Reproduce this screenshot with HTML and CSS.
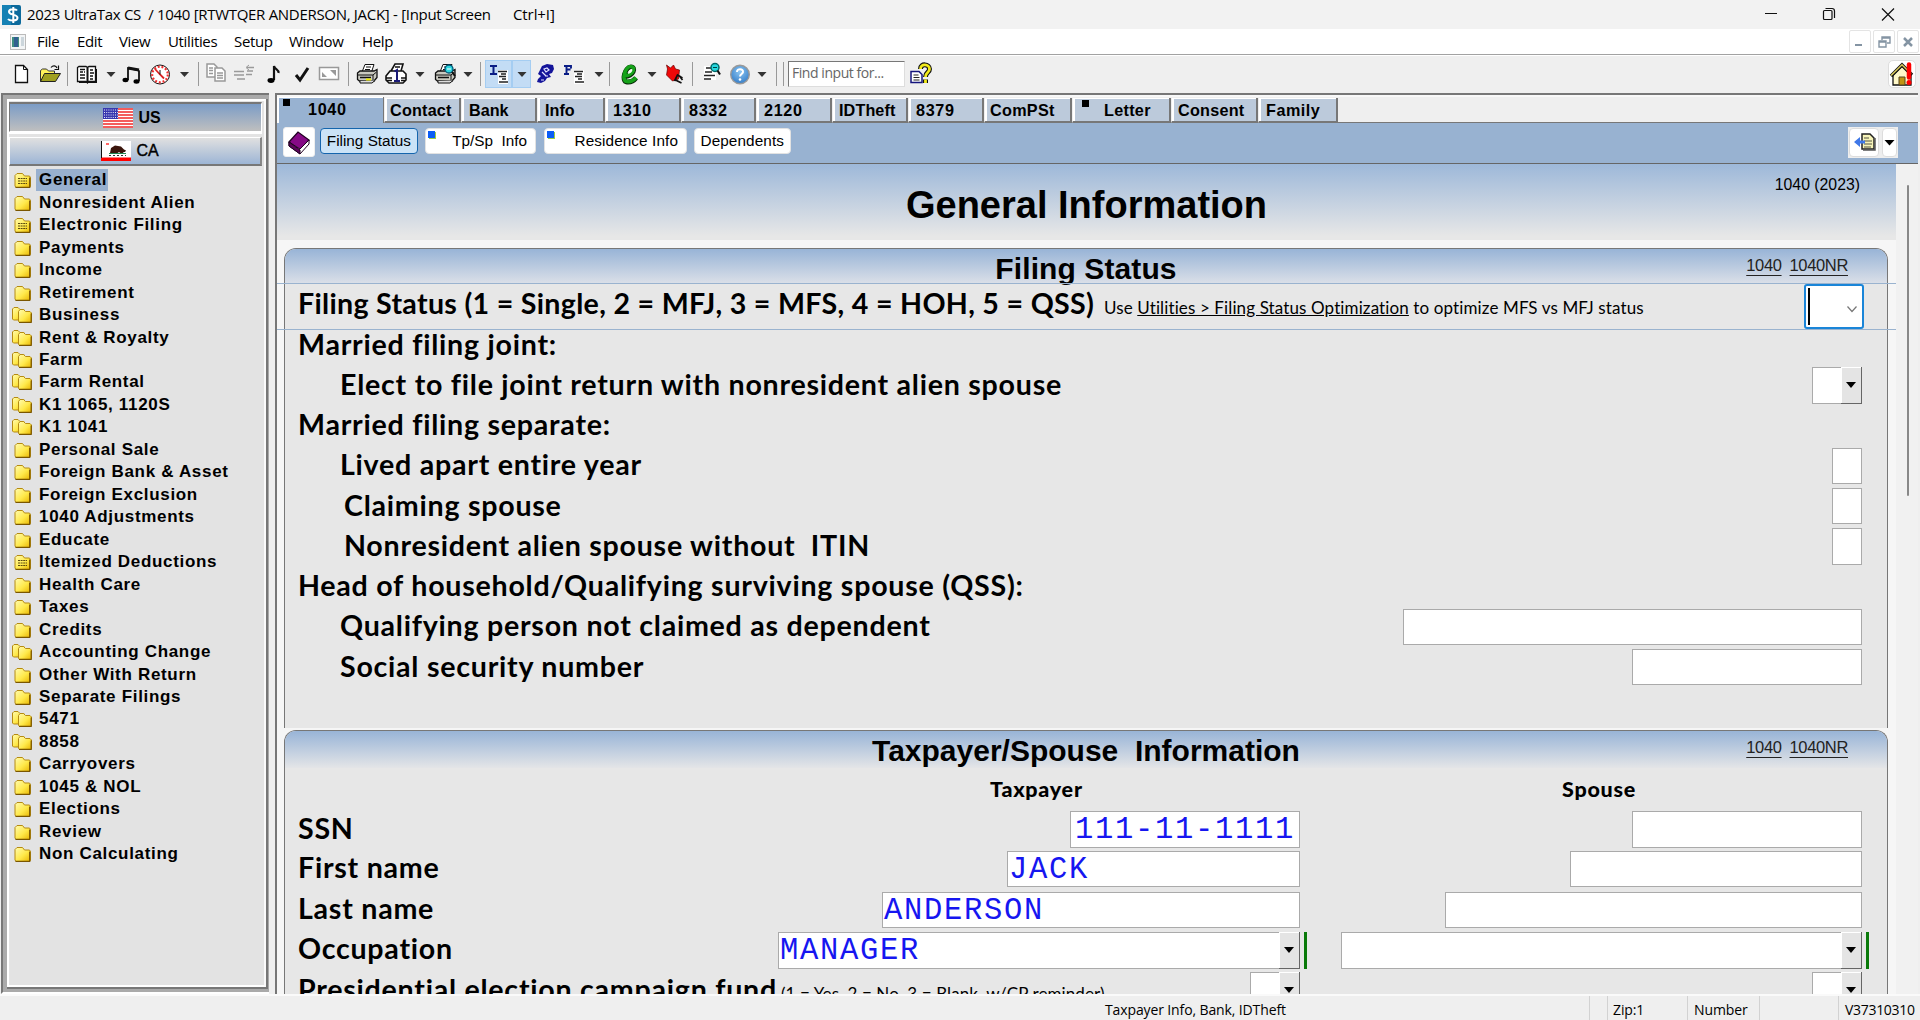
FILE: index.html
```html
<!DOCTYPE html>
<html lang="en">
<head>
<meta charset="utf-8">
<title>2023 UltraTax CS</title>
<link rel="stylesheet" href="styles.css">
</head>
<body>
<svg class="defs" width="0" height="0">
<defs>
<linearGradient id="gold" x1="0" y1="0" x2="1" y2="1"><stop offset="0" stop-color="#fffbb0"/><stop offset=".55" stop-color="#ffe94a"/><stop offset="1" stop-color="#e8b400"/></linearGradient>
<radialGradient id="ball" cx=".5" cy=".35" r=".6"><stop offset="0" stop-color="#8cc6f2"/><stop offset="1" stop-color="#3c83cb"/></radialGradient>
<symbol id="dn" viewBox="0 0 12 24"><path d="M1.500 10h9L6 15z" fill="#333"/></symbol>
<symbol id="folder" viewBox="0 0 20 18"><path d="M3 4.500 5 2.500h5.500l2 2.500h5l1 1.500v9l-1.500 1H4L3 15z" fill="url(#gold)" stroke="#b58a12"/><path d="M3.500 16.300h14.200V6.500" fill="none" stroke="#7a5600" stroke-width="1.300"/></symbol>
<symbol id="folderdoc" viewBox="0 0 20 18"><use href="#folder"/><path d="M6 7.500h9M6 10h9M6 12.500h9" stroke="#5c4a10" stroke-width="1.200" stroke-dasharray="2 .6"/></symbol>
<symbol id="folders" viewBox="0 0 20 18"><path d="M.5 3 2 1.500h4L8 3.500h4v9l-1 1.500H1.500l-1-1z" fill="url(#gold)" stroke="#b58a12"/><path d="M6.500 5.500 8 3.500h3.500l2 2H18l1.500 1.500v8.500l-1 1H7.500l-1-1z" fill="url(#gold)" stroke="#b58a12"/><path d="M7 16.300h12.200V7.500" fill="none" stroke="#7a5600" stroke-width="1.200"/></symbol>
<symbol id="printer" viewBox="0 0 24 24"><path d="M7 10 10 2.500h9L16.500 10z" fill="#fff" stroke="#111"/><path d="M11 5h5M10 7.500h5" stroke="#111"/><path d="M2.500 11 5 9h14l3-1.500v8L19 19H4.500l-2-1.500z" fill="#c9c9c0" stroke="#111" stroke-width="1.300"/><path d="M3 13h15l3.500-3M18 13v6" fill="none" stroke="#111"/><path d="M5 15.500h11" stroke="#111" stroke-width="1.500"/><path d="M5 19v2h12l3-2.500" fill="#ddd" stroke="#111"/></symbol>
</defs>
</svg>
<div class="window">
<header class="titlebar">
  <svg class="logo" width="19" height="20" viewBox="0 0 19 20"><rect width="19" height="20" rx="2" fill="#0c6a9c"/><path d="M0 0h9v20H0z" fill="#1681b4"/><path d="M15 5.500C14 3.800 7 3.400 7 6.700c0 3.800 8.500 2 8.500 6 0 3.700-8 3.200-9.500 1.300M11.300 2v16" fill="none" stroke="#fff" stroke-width="2"/></svg>
  <span class="caption">2023 UltraTax CS&nbsp; / 1040 [RTWTQER ANDERSON, JACK] - [Input Screen</span><span class="shortcut">Ctrl+I]</span>
  <svg class="winctl" width="140" height="29" viewBox="0 0 140 29"><path d="M3 13.500h12M120 8.500l12 12M132 8.500l-12 12" stroke="#111" fill="none" stroke-width="1.200"/><rect x="61.500" y="10.500" width="8.500" height="9" rx="1" fill="none" stroke="#111" stroke-width="1.200"/><path d="M63.500 8.500h6.500q2.500 0 2.500 2.500v7" fill="none" stroke="#111" stroke-width="1.200"/></svg>
</header>
<nav class="menubar">
  <svg class="docicon" width="16" height="16" viewBox="0 0 16 16"><rect x=".5" y=".5" width="15" height="15" fill="#f3f5f6" stroke="#bbb"/><rect x="2" y="3" width="7" height="10" fill="#3f8f80"/><rect x="4" y="3" width="4" height="10" fill="#316090"/><rect x="11" y="3" width="3" height="9" fill="#ccd6dc"/></svg>
  <span class="m1">File</span><span class="m2">Edit</span><span class="m3">View</span><span class="m4">Utilities</span><span class="m5">Setup</span><span class="m6">Window</span><span class="m7">Help</span>
  <div class="mdi"><span><svg width="20" height="21" viewBox="0 0 20 21"><path d="M5 14h7" stroke="#8494a3" stroke-width="2"/></svg></span><span><svg width="20" height="21" viewBox="0 0 20 21"><path d="M8 9V6h8v6h-3M8 7h8M5 10h7v6H5zM5 11h7" fill="none" stroke="#8494a3" stroke-width="1.400"/></svg></span><span><svg width="20" height="21" viewBox="0 0 20 21"><path d="m6 7 8 8m0-8-8 8" stroke="#8494a3" stroke-width="2.500"/></svg></span></div>
</nav>
<div class="toolbar">
  <svg width="28" height="24" viewBox="0 0 24 24"><path d="M6.500 3.500h8l4 4v13h-12z" fill="#fff" stroke="#111" stroke-width="1.300"/><path d="M14.500 3.500v4h4" fill="none" stroke="#111"/></svg>
  <svg width="30" height="24" viewBox="0 0 24 24"><path d="M2.500 19.500v-11l2-1.500h4l2 2h6v3" fill="#fff25a" stroke="#333"/><path d="m2.500 19.500 4-8h16l-5 8z" fill="#a0a020" stroke="#222"/><path d="M13 5.500c2-2.500 5-2 6 .5M20.500 3.500v4h-4" fill="none" stroke="#111" stroke-width="1.200"/></svg>
  <i class="sep"></i>
  <svg width="36" height="24" viewBox="0 0 24 24"><path d="M2.500 5.500 4 4.500h7l1.500 1 1.500-1h6.500v15h-7l-1 1.500-1.500-1.500H2.500z" fill="#fff" stroke="#111" stroke-width="1.300"/><path d="M12.500 5.500V20M4 20h17V7" fill="none" stroke="#111" stroke-width="2"/><path d="M5 7.500h5M5 10h3m1 0h1M5 13h5M5 16h5M15 8h3M15 11h4M15 14h3M15 17h3" stroke="#111" stroke-width="1.600"/></svg>
  <svg width="12" height="24"><use href="#dn"/></svg>
  <svg width="30" height="24" viewBox="0 0 24 24"><path d="M8 18V6l10 2 1 1v10" fill="none" stroke="#111" stroke-width="1.800"/><path d="M8 6l11 2" stroke="#111" stroke-width="3"/><ellipse cx="5.500" cy="18" rx="3" ry="2.200"/><ellipse cx="16.500" cy="19.500" rx="3" ry="2.200"/></svg>
  <svg width="26" height="24" viewBox="0 0 24 24"><circle cx="12" cy="12.500" r="9.500" fill="#fff" stroke="#111"/><circle cx="12" cy="12.500" r="7.800" fill="none" stroke="#e33" stroke-width="2.200" stroke-dasharray="2 1.800"/><path d="M7 7l5 5.500 4 4" stroke="#d22" stroke-width="1.800" fill="none"/><path d="M12 8v4.500" stroke="#111"/></svg>
  <svg width="23" height="24"><use href="#dn"/></svg>
  <i class="sep"></i>
  <svg width="32" height="24" viewBox="0 0 24 24"><path d="M3 2h7l3 3v10H3z" fill="#fff" stroke="#999" stroke-width="1.500"/><path d="M11 6h7l3 3v10H11z" fill="#fff" stroke="#999" stroke-width="1.500"/><path d="M5 6h4M5 8.500h4M5 11.500h4M13 11h6M13 13.500h6M13 16h6" stroke="#999" stroke-width="1.400"/></svg>
  <svg width="24" height="24" viewBox="0 0 24 24"><path d="M2 9.500h10M2 13h10M5 17h8M15 5.500h7M15 9h6M14 12.500h6" stroke="#9a9a9a" stroke-width="1.700"/><path d="m17 3-3 2.500L17 8" fill="none" stroke="#9a9a9a"/></svg>
  <svg width="36" height="24" viewBox="0 0 24 24"><path d="M12 18V4c1 4 5 3 4.500 7" fill="none" stroke="#111" stroke-width="2.200"/><ellipse cx="9" cy="18.500" rx="3.500" ry="2.400"/></svg>
  <svg width="20" height="24" viewBox="0 0 20 24"><path d="M4 13l4 5L16 6" fill="none" stroke="#111" stroke-width="3"/></svg>
  <svg width="34" height="24" viewBox="0 0 24 24"><rect x="2.500" y="5.500" width="19" height="12" fill="#fff" stroke="#999" stroke-width="1.500"/><path d="M5 15v-5l5 5zM19 8h-6l6 6z" fill="#999"/></svg>
  <i class="sep"></i>
  <svg width="34" height="24" viewBox="0 0 24 24"><use href="#printer"/><path d="M11 17.500h5" stroke="#ee0" stroke-width="2"/></svg>
  <svg width="24" height="24" viewBox="0 0 24 24"><path d="M7 9 11 2h8l-2 7zM2 14l4-5h13l3 3v6l-3 3H5l-3-3z" fill="#fff" stroke="#111" stroke-width="1.600"/><path d="M10.500 9.500 13 8v11M10 19h6" fill="none" stroke="#1b1b78" stroke-width="2"/><path d="M2 16h6M17 16h5M3 18.500h5M17 18.500h4M11 5h5" stroke="#111" stroke-width="1.300"/></svg>
  <svg width="24" height="24"><use href="#dn"/></svg>
  <svg width="26" height="24" viewBox="0 0 24 24"><use href="#printer"/><circle cx="16" cy="7" r="4" fill="#2cd8df" stroke="#057" stroke-width="1.300"/><path d="M14 7h4" stroke="#fff"/><path d="m19 10 3 4" stroke="#111" stroke-width="2"/></svg>
  <svg width="20" height="24"><use href="#dn"/></svg>
  <i class="sep"></i>
  <span class="active"><svg width="27" height="24" viewBox="0 0 27 24"><path d="M5 4h7M8.500 4v8M5 12h7" stroke="#0a1d86" stroke-width="2"/><path d="M13 8h10v14H13z" fill="#fff"/><path d="M13 9.500h9M16 12h5M14 14.500h7M17 17h4M14 20h9" stroke="#222" stroke-width="1.500"/></svg></span><span class="active drop"><svg width="12" height="24"><use href="#dn"/></svg></span>
  <svg width="28" height="24" viewBox="0 0 24 24"><path d="M5 17 8 14 5 12l2-4 2-4 5-2 6 1 1 4-2 4-3 1 2 3-4 1-2 3-4 2-4-1z" fill="#14149a"/><path d="M11 7l3-1 2 2-3 2zM12 14h3M9 10l4 4M8 18h3" stroke="#e4e4ff" fill="none" stroke-width="1.200"/></svg>
  <svg width="32" height="24" viewBox="0 0 24 24"><path d="M1 4h7v2.500M3.500 4v8M1 12h5M3.500 7.500h4" fill="none" stroke="#0a1d86" stroke-width="1.900"/><path d="M11 8h10v14H11z" fill="#fff"/><path d="M11 9.500h9M14 12h5M12 14.500h7M15 17h4M12 20h9" stroke="#222" stroke-width="1.500"/></svg>
  <svg width="16" height="24"><use href="#dn"/></svg>
  <i class="sep"></i>
  <svg width="36" height="24" viewBox="0 0 24 24"><path d="M7 14.500C17 14 19 5 14 5 8 5 4 19.500 10 20c4 .4 7-1.500 9-4" fill="none" stroke="#062806" stroke-width="5"/><path d="M7 14C17 13.500 19 4.500 14 4.500 8 4.500 4 19 10 19.500c4 .4 7-1.500 9-4" fill="none" stroke="#16a21a" stroke-width="3.700"/><path d="M11 12c4-1 5-4 4-5-2-.5-3.500 2-4 5z" fill="#f0fff0"/></svg>
  <svg width="10" height="24" viewBox="1 0 10 24"><path d="M1.500 10h9L6 15z" fill="#333"/></svg>
  <svg width="33" height="24" viewBox="0 0 24 24"><path d="m5 3 4 3 3-3 2 4 4 1-1 9-6 2-6-6 1-6z" fill="#f00808" stroke="#600" stroke-width=".7"/><path d="M13 19l3-6 5 3M14 18l6 3M18 14l3 4" stroke="#111" stroke-width="1.700" fill="none"/></svg>
  <i class="sep"></i>
  <svg width="36" height="24" viewBox="0 0 24 24"><path d="M4 4h12v14H4z" fill="#fff"/><path d="M6 6h5M5 10h7M4 13.500h11M4 17h7" stroke="#222" stroke-width="1.700"/><circle cx="15" cy="5.500" r="4" fill="#25d8df" stroke="#066" stroke-width="1.500"/><path d="M13 5.500h4" stroke="#044"/><path d="m17.500 8.500 2.500 4" stroke="#111" stroke-width="2"/></svg>
  <svg width="20" height="24" viewBox="1 0 20 24"><circle cx="11" cy="12.500" r="9.300" fill="url(#ball)" stroke="#999" stroke-width="1.400"/><path d="M8 10c0-4 6.500-3.500 6 0-.3 2-3 2-3 4.500" fill="none" stroke="#fff" stroke-width="2"/><circle cx="11" cy="17.500" r="1.300" fill="#fff"/></svg>
  <svg width="24" height="24"><use href="#dn"/></svg>
  <i class="sep"></i><i class="sep second"></i>
  <div class="find">Find input for...</div>
  <svg width="27" height="24" viewBox="0 0 24 24"><path d="M2.500 9.500h8l3 3v8h-11z" fill="#fff" stroke="#14147d" stroke-width="1.500"/><path d="M5 13h5M5 15.500h6M5 18h6" stroke="#222"/><path d="M12 7c0-6 9-5 9 0 0 4-4 3-4 8M17 17.500V21" fill="none" stroke="#111" stroke-width="5"/><path d="M12 7c0-6 9-5 9 0 0 4-4 3-4 8M17 17.500V21" fill="none" stroke="#f1e91a" stroke-width="2.800"/></svg>
  <span class="home"><svg width="26" height="25" viewBox="0 0 26 25"><path d="M4 13v10h18V13l-9-9z" fill="#fff8c8" stroke="#111" stroke-width="1.300"/><path d="M2 14 13 3l10 10" fill="none" stroke="#111" stroke-width="3.400"/><path d="M2 13.500 13 2.800l9 9" fill="none" stroke="#d6c65a" stroke-width="1.600"/><path d="M10 15h6v8h-6z" fill="#c09412" stroke="#542"/><path d="M20 2.500v13" stroke="#f00" stroke-width="4.500" stroke-linecap="round"/><circle cx="20" cy="20.500" r="2.500" fill="#f00"/></svg></span>
</div>
<div class="workspace">
<aside class="side"><div class="panel">
  <div class="state us"><svg width="30" height="20" viewBox="0 0 30 20"><rect width="30" height="20" fill="#fff"/><path d="M0 1h30M0 4h30M0 7h30M0 10h30M0 13h30M0 16h30M0 19h30" stroke="#f02828" stroke-width="1.700"/><path d="M0 0h15v11H0z" fill="#3838b0"/><path d="M1 2h14M1 4.500h14M1 7h14M1 9.500h14" stroke="#fff" stroke-width=".9" stroke-dasharray="1 1.200"/></svg>US</div>
  <div class="state ca"><svg width="30" height="20" viewBox="0 0 30 20"><path d="M0 0h30v20H0z" fill="#fff"/><path d="M0 16.500h30V20H0z" fill="#f00"/><path d="M.5 0v17" stroke="#111"/><path d="M5 3h3" stroke="#f33" stroke-width="1.500"/><path d="M9 12l1-5 4-2.500 6 1 3 3 2 1-1 1.500h-2l1 1.500h-3l-2-1.500-2 1.500h-3z" fill="#3a150c"/><path d="M8 12.500h17" stroke="#285" /><path d="M8 14.500h17" stroke="#333" stroke-dasharray="2 2"/></svg>CA</div>
  <ul class="tree">
    <li class="sel"><svg><use href="#folderdoc"/></svg><b>General</b></li>
    <li><svg><use href="#folder"/></svg><b>Nonresident Alien</b></li>
    <li><svg><use href="#folderdoc"/></svg><b>Electronic Filing</b></li>
    <li><svg><use href="#folder"/></svg><b>Payments</b></li>
    <li><svg><use href="#folder"/></svg><b>Income</b></li>
    <li><svg><use href="#folder"/></svg><b>Retirement</b></li>
    <li><svg><use href="#folders"/></svg><b>Business</b></li>
    <li><svg><use href="#folders"/></svg><b>Rent &amp; Royalty</b></li>
    <li><svg><use href="#folders"/></svg><b>Farm</b></li>
    <li><svg><use href="#folders"/></svg><b>Farm Rental</b></li>
    <li><svg><use href="#folders"/></svg><b>K1 1065, 1120S</b></li>
    <li><svg><use href="#folders"/></svg><b>K1 1041</b></li>
    <li><svg><use href="#folder"/></svg><b>Personal Sale</b></li>
    <li><svg><use href="#folder"/></svg><b>Foreign Bank &amp; Asset</b></li>
    <li><svg><use href="#folder"/></svg><b>Foreign Exclusion</b></li>
    <li><svg><use href="#folder"/></svg><b>1040 Adjustments</b></li>
    <li><svg><use href="#folder"/></svg><b>Educate</b></li>
    <li><svg><use href="#folderdoc"/></svg><b>Itemized Deductions</b></li>
    <li><svg><use href="#folder"/></svg><b>Health Care</b></li>
    <li><svg><use href="#folder"/></svg><b>Taxes</b></li>
    <li><svg><use href="#folder"/></svg><b>Credits</b></li>
    <li><svg><use href="#folders"/></svg><b>Accounting Change</b></li>
    <li><svg><use href="#folder"/></svg><b>Other With Return</b></li>
    <li><svg><use href="#folder"/></svg><b>Separate Filings</b></li>
    <li><svg><use href="#folders"/></svg><b>5471</b></li>
    <li><svg><use href="#folders"/></svg><b>8858</b></li>
    <li><svg><use href="#folder"/></svg><b>Carryovers</b></li>
    <li><svg><use href="#folder"/></svg><b>1045 &amp; NOL</b></li>
    <li><svg><use href="#folder"/></svg><b>Elections</b></li>
    <li><svg><use href="#folder"/></svg><b>Review</b></li>
    <li><svg><use href="#folder"/></svg><b>Non Calculating</b></li>
  </ul>
</div></aside>
<main class="main">
  <div class="tabs">
    <div class="tab on num">1040</div><div class="tab t77">Contact</div><div class="tab t77b">Bank</div><div class="tab t67">Info</div><div class="tab t76 num">1310</div><div class="tab t74 num">8332</div><div class="tab t76 num">2120</div><div class="tab t76 idt">IDTheft</div><div class="tab t76 num">8379</div><div class="tab t88">ComPSt</div><div class="tab t99 marked">Letter</div><div class="tab t86">Consent</div><div class="tab t80">Family</div><div class="tabrest"></div>
  </div>
  <div class="subbar">
    <span class="book"><svg width="28" height="27" viewBox="0 0 28 27"><path d="M4 14 13 4l11 8-9 11z" fill="#860a86" stroke="#210021" stroke-width="1.300"/><path d="m4 14 0 4 11 8 9-10v-4l-9 9z" fill="#fff" stroke="#210021"/><path d="M4 14v4l11 8v-4z" fill="#5c055c" stroke="#210021"/></svg></span>
    <span class="sub cur">Filing Status</span><span class="sub s2 dot">Tp/Sp&nbsp; Info</span><span class="sub s3 dot">Residence Info</span><span class="sub s4">Dependents</span>
    <span class="jump"><span><svg width="28" height="26" viewBox="0 0 28 26"><path d="M12 5h8l4 4v11H12z" fill="#f6f3b8" stroke="#222" stroke-width="1.500"/><path d="M13 21h12V9" fill="none" stroke="#555" stroke-width="1.500"/><path d="M14 9h5M14 12h8M14 15h8M14 18h7" stroke="#554"/><path d="M4 13l6-5v3.500h5v3h-5V18z" fill="#3f78e8"/></svg></span><span class="narrow"><svg width="12" height="26" viewBox="0 0 12 26"><path d="M1.500 11h10l-5 5.500z"/></svg></span></span>
  </div>
  <div class="view">
  <div class="page">
    <div class="banner"><h1>General Information</h1><span class="form">1040 (2023)</span></div>
    <section class="box first">
      <div class="head"><h2>Filing Status</h2><span class="links"><u>1040</u><u>1040NR</u></span></div>
      <div class="current"><b class="status">Filing Status (1 = Single, 2 = MFJ, 3 = MFS, 4 = HOH, 5 = QSS)</b><span class="hint">Use <u>Utilities &gt; Filing Status Optimization</u> to optimize MFS vs MFJ status</span>
        <span class="focus"><svg width="12" height="8" viewBox="0 0 12 8"><path d="m1.500 1.500 4.500 5 4.500-5" fill="none" stroke="#777" stroke-width="1.200"/></svg></span></div>
      <div class="row short">Married filing joint:</div>
      <div class="row in">Elect to file joint return with nonresident alien spouse<span class="combo c50"><i class="btn"></i></span></div>
      <div class="row">Married filing separate:</div>
      <div class="row in">Lived apart entire year<span class="field c30"></span></div>
      <div class="row in2">Claiming spouse<span class="field c30"></span></div>
      <div class="row in2">Nonresident alien spouse without&nbsp; ITIN<span class="field c30 tall"></span></div>
      <div class="row">Head of household/Qualifying surviving spouse (QSS):</div>
      <div class="row in">Qualifying person not claimed as dependent<span class="field c459"></span></div>
      <div class="row in">Social security number<span class="field c230"></span></div>
    </section>
    <section class="box second">
      <div class="head"><h2>Taxpayer/Spouse&nbsp; Information</h2><span class="links"><u>1040</u><u>1040NR</u></span></div>
      <div class="cols"><b class="tp">Taxpayer</b><b class="sp">Spouse</b></div>
      <div class="pair"><label>SSN</label><span class="field c230 ssn tall">111-11-1111</span><span class="field c230 tall"></span></div>
      <div class="pair"><label>First name</label><span class="field c293">JACK</span><span class="field c292"></span></div>
      <div class="pair"><label>Last name</label><span class="field c418">ANDERSON</span><span class="field c417"></span></div>
      <div class="pair"><label>Occupation</label><span class="combo c522 flagged"><em>MANAGER</em><i class="btn"></i></span><span class="combo c521 flagged"><i class="btn"></i></span></div>
      <div class="pair"><label>Presidential election campaign fund<small>(1 = Yes, 2 = No, 3 = Blank, w/CP reminder)</small></label><span class="combo c50"><i class="btn"></i></span><span class="combo c50"><i class="btn"></i></span></div>
    </section>
  </div>
  <div class="scroll"><i></i></div>
  </div>
</main>
</div>
<footer class="status-bar"><span class="where">Taxpayer Info, Bank, IDTheft</span><span class="blank"></span><span class="zip">Zip:1</span><span class="number">Number</span><span class="gap"></span><span class="ver">V37310310</span></footer>
</div>
</body>
</html>
```
FILE: styles.css
```css
* { box-sizing: border-box; }
body { margin: 0; background: #efefef; color: #000; font-family: "Liberation Sans", Arial, sans-serif; }
svg { display: block; flex: none; }
h1, h2, ul { margin: 0; padding: 0; }
i, em { font-style: normal; }
.defs { position: absolute; }
.window { width: 1920px; height: 1020px; overflow: hidden; display: flex; flex-direction: column; }

.titlebar { height: 29px; flex: none; background: #f2f2f2; display: flex; align-items: center; padding: 0 18px 0 2px; font: 15px/29px "Open Sans", "Noto Sans", sans-serif; white-space: nowrap; }
.caption { margin-left: 6px; width: 467px; letter-spacing: -0.3px; }
.shortcut { margin-left: 19px; letter-spacing: -.1px; }
.winctl { margin-left: auto; }

.menubar { height: 26px; flex: none; background: #fff; border-bottom: 1px solid #a2a2a2; display: flex; align-items: center; padding-left: 9px; font: 15px/25px "Open Sans", "Noto Sans", sans-serif; letter-spacing: -0.35px; }
.docicon { width: 18px; margin-right: 10px; }
.m1 { width: 40px; } .m2 { width: 42px; } .m3 { width: 49px; } .m4 { width: 66px; } .m5 { width: 55px; } .m6 { width: 73px; }
.mdi { margin-left: auto; display: flex; gap: 2px; padding-right: 1px; }
.mdi span { width: 22px; height: 23px; border: 1px solid #e4e4e4; border-radius: 2px; }

.toolbar { height: 38px; flex: none; background: #efefef; border-top: 1px solid #fff; display: flex; align-items: center; padding: 0 4px 1px 7px; }
.sep { width: 1px; height: 24px; background: #999; margin: 0 1px 0 2px; }
.second { margin: 0 2px 0 5px; }
.active { height: 28px; width: 27px; background: #c3dcf5; border: 1px solid #a5cdf2; display: flex; align-items: center; justify-content: center; margin-left: 3px; }
.drop { width: 19px; margin-left: 0; border-left-color: #a5cdf2; }
.find { width: 117px; height: 26px; background: #fff; border: 1px solid #ddd; border-top-color: #777; border-left-color: #777; color: #666; font: 14px/22px "Open Sans", "Noto Sans", sans-serif; padding-left: 3px; letter-spacing: -0.45px; white-space: nowrap; margin: 0 2px; }
.home { margin-left: auto; width: 28px; height: 28px; background: #fff; border: 1px solid #ddd; border-radius: 5px; display: flex; align-items: center; justify-content: center; }

.workspace { height: 901px; flex: none; display: flex; gap: 6px; padding-left: 1px; }
.side { width: 268px; height: 901px; border: solid #777; border-width: 2px 0 0 2px; background: #aaa; padding: 4px 3px 5px 4px; border-bottom: 2px solid #fff; }
.panel { height: 100%; background: #e3e3e3; border: 2px solid #fff; border-right-color: #fafafa; box-shadow: 1px 1px 0 1px #777; padding: 1px 2px 0 0; }
.state { display: flex; justify-content: center; align-items: center; gap: 6px; height: 30px; font: 700 16px/28px "Liberation Sans", sans-serif; letter-spacing: -.2px; padding-right: 8px; }
.us { background: linear-gradient(#7b9cc6, #bfbfbf); border: 1px solid #fff; border-top: 2px solid #777; border-left: 1px solid #777; box-shadow: 0 2px #fff; }
.ca { margin-top: 5px; height: 29px; background: linear-gradient(#e0e0e0, #9db5d5); border-bottom: 2px solid #777; border-right: 2px solid #888; border-left: 1px solid #fff; border-top: 1px solid #fff; }
.state.ca { font-weight: 400; -webkit-text-stroke: .4px #000; padding-right: 11px; line-height: 30px; }
.tree { list-style: none; padding-top: 3px; }
.tree li { height: 22.48px; display: flex; align-items: center; padding-left: 3px; }
.tree svg { width: 20px; height: 18px; }
.tree b { height: 22px; line-height: 21px; font-size: 17px; padding: 0 1px 0 3px; margin-left: 4px; white-space: nowrap; letter-spacing: .68px; }
.tree .sel b { background: #98b0cf; }

.main { width: 1643px; height: 901px; display: flex; flex-direction: column; border-top: 2px solid #777; border-left: 2px solid #777; background: #fff; }
.tabs { height: 28px; flex: none; display: flex; background: #efefef; align-items: flex-end; border-top: 2px solid #f8f8f8; }
.tab { height: 25px; background: #bccadb; border: solid #777; border-width: 0 2px 2px 0; box-shadow: inset 2px 1px #fff; font-weight: 700; font-size: 16.2px; line-height: 24px; padding-left: 7px; white-space: nowrap; position: relative; }
.tab:not(.on) { border-left: 1px solid #eee; }
.tab.num { letter-spacing: .65px; }
.idt { letter-spacing: .1px; padding-left: 6px; }
.on { width: 107px; height: 26px; background: #98b2d1; border-bottom: 0; padding-left: 31px; border-right-width: 1px; }
.on::before, .marked::before { content: ""; position: absolute; left: 6px; top: 2px; width: 7px; height: 7px; background: #000; }
.t77 { width: 77px; padding-left: 5px; letter-spacing: .2px; } .t77b { width: 76px; } .t67 { width: 68px; } .t76 { width: 76px; } .t74 { width: 75px; } .t88 { width: 88px; padding-left: 5px; letter-spacing: .3px; } .t99 { width: 99px; } .t86 { width: 87px; letter-spacing: .25px; padding-left: 6px; } .t80 { width: 80px; letter-spacing: .5px; }
.marked { padding-left: 31px; letter-spacing: .3px; } .marked::before { left: 9px; }
.tabrest { flex: 1; height: 26px; border-bottom: 1px solid #777; }
.subbar { height: 41px; flex: none; background: #98b2d1; border-bottom: 1px solid #666; display: flex; align-items: flex-start; padding: 4px 20px 0 6px; }
.book { width: 32px; height: 30px; background: #fff; border: 1px solid #eee; border-radius: 3px; display: flex; justify-content: center; margin-right: 5px; }
.sub { height: 26px; margin-top: 1px; background: #fff; border: 1px solid #e2e2e2; border-radius: 4px; font-size: 15.3px; line-height: 24px; text-align: right; padding-right: 8px; white-space: nowrap; position: relative; margin-right: 8px; }
.sub.cur { width: 98px; background: #cbe3f7; border: 1.5px solid #1565ad; padding-right: 6px; margin-right: 7px; }
.s2 { width: 111px; } .s3 { width: 143px; letter-spacing: .1px; } .s4 { width: 97px; margin-right: 0; margin-left: -1px; padding-right: 6px; letter-spacing: .1px; }
.dot::before { content: ""; position: absolute; left: 2px; top: 2px; width: 7px; height: 7px; background: #0a5cf5; box-shadow: 1px 1px #9c4; }
.jump { margin-left: auto; display: flex; gap: 3px; width: 50px; height: 31px; background: #eee; padding: 1px; }
.jump span { background: #fff; border: 1px solid #ddd; border-radius: 4px; width: 30px; }
.jump .narrow { width: 15px; }

.view { flex: 1; min-height: 0; display: flex; overflow: hidden; }
.page { width: 1619px; flex: none; background: #f6f6f6; }
.banner { height: 76px; background: linear-gradient(#9db8d9, #e7e7e7 95%); text-align: center; position: relative; margin-bottom: 8px; }
h1 { font-size: 38px; line-height: 78px; padding-top: 2px; height: 76px; }
.form { position: absolute; right: 36px; top: 11px; font-size: 15.8px; line-height: 20px; }
.box { margin: 0 8px 0 7px; border: 1px solid #777; border-bottom: 0; background: #e7e7e7; border-radius: 12px 12px 0 0; }
.first { height: 480px; margin-bottom: 2px; }
.box .head { height: 34px; border-radius: 11px 11px 0 0; background: linear-gradient(#98b4d7, #dadfe8); position: relative; text-align: center; }
h2 { font-size: 30px; line-height: 40px; }
.first h2 { letter-spacing: .1px; }
.links { position: absolute; right: 39px; top: 6px; display: flex; gap: 8px; font: 16.5px/20px "Liberation Sans", sans-serif; letter-spacing: -.35px; color: #222; }
.links u { text-underline-offset: 4px; text-decoration-thickness: 1px; }
.current { height: 47px; margin: 0 -9px 0 -8px; border: solid #9ab3cf; border-width: 1px 0; display: flex; align-items: baseline; padding-left: 21px; position: relative; line-height: 39px; white-space: nowrap; }
.status, .row, .pair label { font-family: Lato, sans-serif; font-weight: 700; font-size: 28.6px; letter-spacing: .75px; }
.status { width: 806px; letter-spacing: .3px; }
.hint { font: 17px/39px Lato, sans-serif; letter-spacing: .12px; }
.focus { position: absolute; right: 32px; top: 0; width: 60px; height: 45px; border: 2px solid #1a85d8; border-radius: 3px; background: #fff; }
.focus::before { content: ""; position: absolute; left: 2px; top: 2px; width: 1.5px; height: 37px; background: #000; }
.focus svg { position: absolute; right: 4px; top: 19px; }
.row, .pair { height: 40.3px; display: flex; align-items: center; padding: 0 25px 3px 13px; white-space: nowrap; }
.row .field, .row .combo { margin: 3px 0 0 auto; }
.row.short { height: 35px; padding-bottom: 7px; }
.row.in { padding-left: 55px; } .row.in2 { padding-left: 59px; }
.field, .combo { display: block; height: 36px; background: #fff; border: 1px solid #aaa; font: 30.5px/37px "Liberation Mono", monospace; letter-spacing: 1.7px; color: #1616f0; padding-left: 1px; position: relative; }
.field.tall { height: 37px; }
.combo { height: 37px; display: flex; }
.btn { margin: -1px -1px -1px auto; width: 21px; background: #e4e4e4; border: solid #666; border-width: 0 1px 1px 0; box-shadow: inset 1px 1px #fff; display: flex; align-items: center; justify-content: center; }
.btn::before { content: ""; border: 5px solid transparent; border-top: 6px solid #000; border-bottom: 0; }
.c30 { width: 30px; } .c50 { width: 50px; } .c230 { width: 230px; } .c459 { width: 459px; } .c293 { width: 293px; } .c292 { width: 292px; } .c418 { width: 418px; } .c417 { width: 417px; } .c522 { width: 522px; } .c521 { width: 521px; }
.field.ssn { padding-left: 4px; }
.flagged::after { content: ""; position: absolute; right: -8px; top: -1px; width: 3px; height: 37px; background: #0a7a0a; }
.second .head { height: 37px; background: linear-gradient(#98b4d7, #e4e5e7); }
.second .links { top: 6px; }
.cols { height: 39px; display: grid; grid-template-columns: 1505px 1fr; font: 700 21.5px/43px Lato, sans-serif; letter-spacing: .75px; }
.cols .tp { padding-left: 705px; }
.cols .sp { margin-left: -228px; }
.pair { display: grid; grid-template-columns: 1fr auto 562px; padding-bottom: 2px; }
.pair > .field, .pair > .combo { margin-top: 4px; }
.pair > :last-child { justify-self: end; }
.pair label { width: 480px; }
.pair small { font: 17px Lato, sans-serif; margin-left: 4px; letter-spacing: .1px; }
.scroll { flex: 1; background: #f1f1f1; padding: 21px 0 0 11px; }
.scroll i { display: block; width: 2px; height: 311px; background: #888; border-radius: 1px; }

.status-bar { flex: 1; background: #efefef; border-top: 2px solid #fafafa; display: flex; font: 14px/28px "Open Sans", "Noto Sans", sans-serif; letter-spacing: -.12px; white-space: nowrap; }
.status-bar span { border-right: 1px solid #d2d2d2; }
.where { width: 1590px; padding-left: 1105px; } .blank { width: 18px; }
.zip { width: 80px; padding-left: 5px; } .number { width: 72px; padding-left: 6px; } .gap { width: 79px; } .status-bar .ver { padding-left: 6px; border: 0; letter-spacing: -.3px; }
```
